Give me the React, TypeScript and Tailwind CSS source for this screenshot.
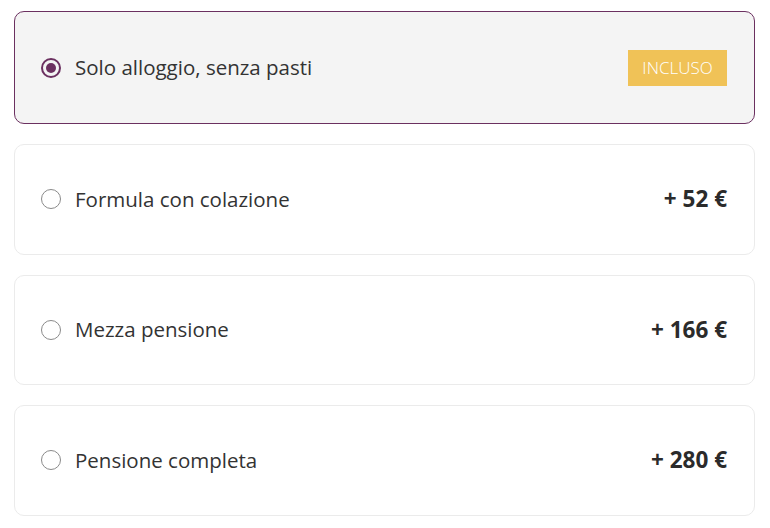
const options = [
  { label: "Solo alloggio, senza pasti", price: null, selected: true },
  { label: "Formula con colazione", price: "+ 52 €", selected: false },
  { label: "Mezza pensione", price: "+ 166 €", selected: false },
  { label: "Pensione completa", price: "+ 280 €", selected: false },
];

const App = () => {
  return (
    <div
      className="min-h-screen bg-white px-[14px] pt-[11px]"
      style={{ fontFamily: '"Open Sans", "Noto Sans", sans-serif' }}
    >
      <div className="flex flex-col gap-[20px] w-[741px]">
        {options.map((opt) => (
          <div
            key={opt.label}
            className={`flex items-center justify-between rounded-[10px] border pl-[26px] pr-[27px] ${
              opt.selected
                ? "h-[113px] bg-[#f4f4f4] border-[#6b3060]"
                : "h-[110.5px] bg-white border-[#ebebeb]"
            }`}
          >
            <div className="flex items-center gap-[14px]">
              {opt.selected ? (
                <span className="w-[20px] h-[20px] rounded-full border-2 border-[#6b3060] flex items-center justify-center">
                  <span className="w-[10px] h-[10px] rounded-full bg-[#6b3060]" />
                </span>
              ) : (
                <span className="w-[20px] h-[20px] rounded-full border border-[#8a8a8a] bg-white" />
              )}
              <span className="text-[20.5px] text-[#333333]">{opt.label}</span>
            </div>
            {opt.price ? (
              <span className="text-[22.5px] font-bold text-[#2b2b2b]">{opt.price}</span>
            ) : (
              <span className="bg-[#f0c257] text-white text-[17px] font-light w-[99px] h-[36px] flex items-center justify-center">
                INCLUSO
              </span>
            )}
          </div>
        ))}
      </div>
    </div>
  );
};

export default App;
